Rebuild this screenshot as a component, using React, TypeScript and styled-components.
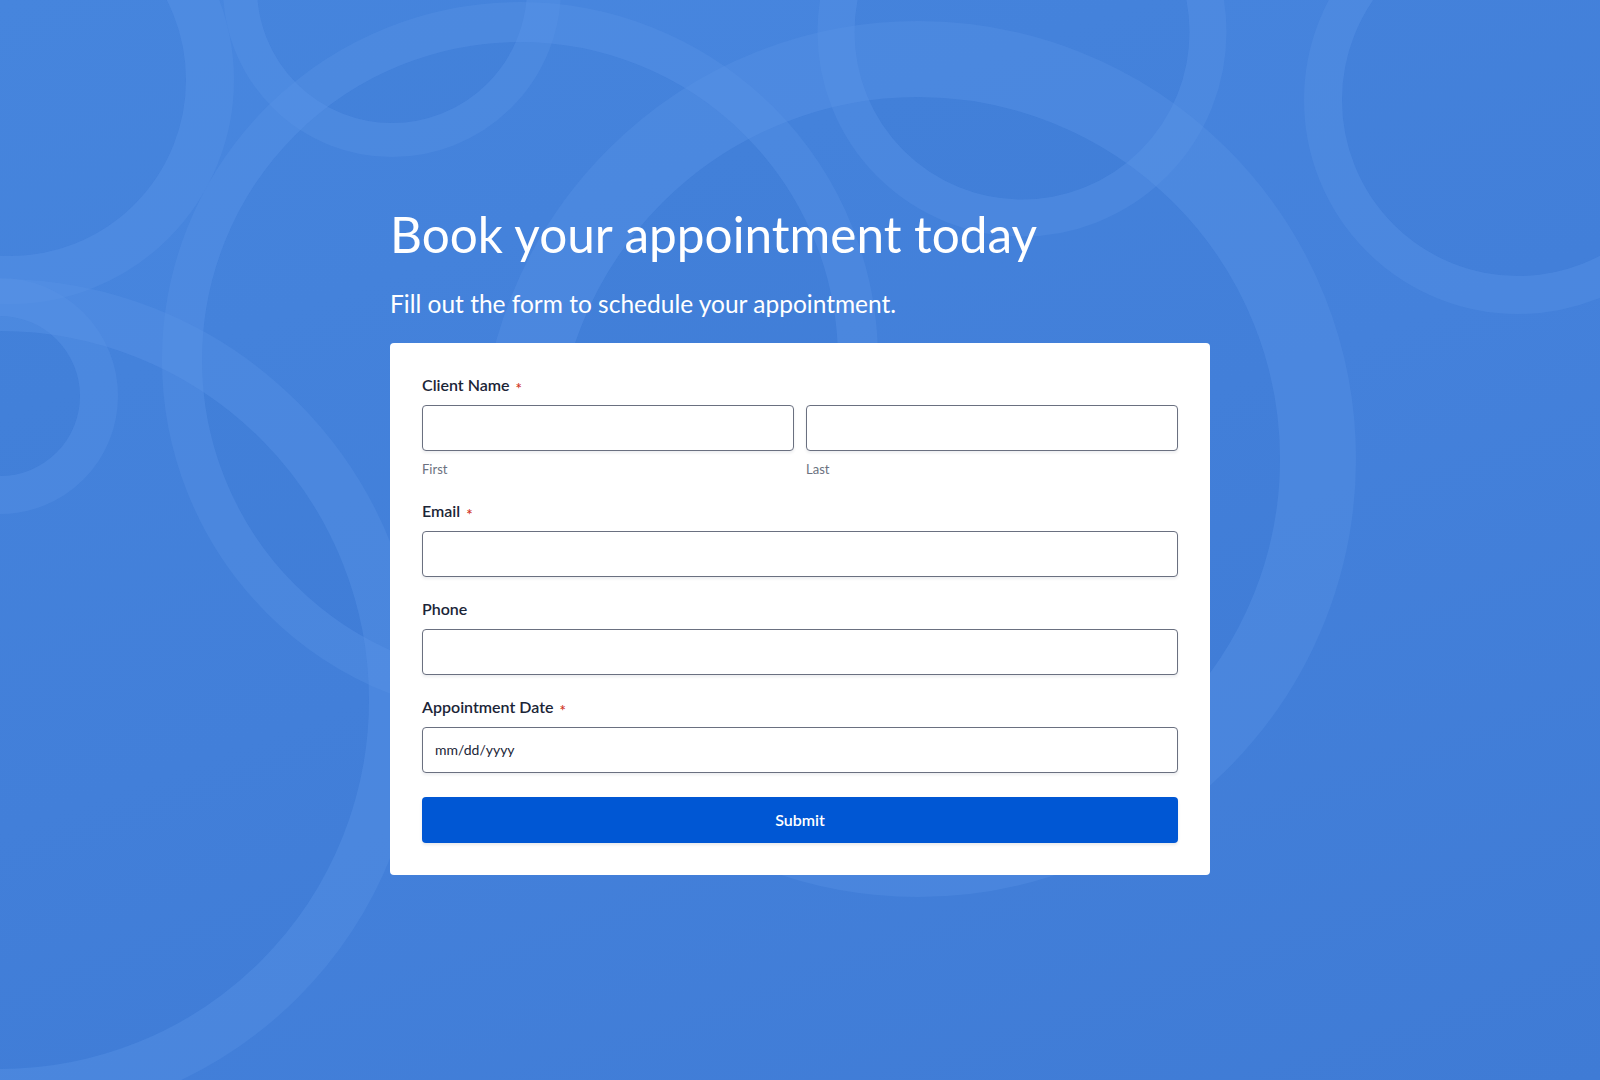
import React from "react";
import styled, { createGlobalStyle } from "styled-components";

const Global = createGlobalStyle`
  html, body { margin: 0; padding: 0; }
  body { font-family: Lato, "Open Sans", Arial, sans-serif; }
  * { box-sizing: border-box; }
`;

const Page = styled.div`
  position: relative;
  width: 100%;
  min-height: 1080px;
  overflow: hidden;
  background: linear-gradient(160deg, #4887df 0%, #4481db 50%, #3f7bd5 100%);
  display: flex;
  justify-content: center;
`;

const Backdrop = styled.svg`
  position: absolute;
  inset: 0;
  width: 100%;
  height: 100%;
  pointer-events: none;
`;

const Content = styled.main`
  position: relative;
  width: 820px;
  padding-top: 205px;
  display: flex;
  flex-direction: column;
`;

const Title = styled.h1`
  margin: 0;
  font-family: Lato, sans-serif;
  font-weight: 400;
  font-size: 49.5px;
  line-height: 1.2;
  color: #ffffff;
`;

const Subtitle = styled.p`
  margin: 25px 0 24px;
  font-family: Lato, sans-serif;
  font-weight: 400;
  font-size: 24.5px;
  line-height: 1.2;
  color: #ffffff;
`;

const Card = styled.form`
  background: #ffffff;
  border-radius: 4px;
  padding: 32px;
  display: flex;
  flex-direction: column;
  gap: 22px;
`;

const Field = styled.div`
  display: flex;
  flex-direction: column;
`;

const Label = styled.label`
  font-family: Lato, sans-serif;
  font-weight: 600;
  font-size: 16px;
  line-height: 20px;
  height: 20px;
  color: #1b2537;
  margin-bottom: 10px;
`;

const Req = styled.span`
  color: #d0341f;
  font-size: 15px;
  line-height: 0;
  margin-left: 6px;
  vertical-align: -3px;
`;

const Pair = styled.div`
  display: grid;
  grid-template-columns: 1fr 1fr;
  gap: 12px;
`;

const Sub = styled.div`
  display: flex;
  flex-direction: column;
`;

const Input = styled.input`
  height: 46px;
  width: 100%;
  border: 1px solid #6a7080;
  border-radius: 4px;
  background: #fff;
  box-shadow: 0 2px 3px rgba(30, 40, 60, 0.08);
  padding: 0 12px;
  font-family: Lato, sans-serif;
  font-size: 14px;
  color: #1b2537;
  outline: none;
  &::placeholder { color: #1b2537; opacity: 1; }
`;

const Hint = styled.span`
  font-family: Lato, sans-serif;
  font-size: 13px;
  line-height: 20px;
  margin-top: 8px;
  color: #6b7180;
`;

const Submit = styled.button`
  margin-top: 2px;
  height: 46px;
  border: none;
  border-radius: 4px;
  background: #0057d4;
  color: #fff;
  font-family: Lato, sans-serif;
  font-weight: 600;
  font-size: 16px;
  box-shadow: 0 2px 3px rgba(30, 40, 60, 0.1);
  cursor: pointer;
`;

const rings = [
  { cx: 10, cy: 80, r: 200, w: 48 },
  { cx: 392, cy: -12, r: 152, w: 34 },
  { cx: 1518, cy: 100, r: 195, w: 38 },
  { cx: 1022, cy: 32, r: 186, w: 37 },
  { cx: 918, cy: 459, r: 400, w: 76 },
  { cx: 520, cy: 360, r: 338, w: 40 },
  { cx: 0, cy: 700, r: 395, w: 52 },
  { cx: 0, cy: 396, r: 99, w: 38 },
];

export default function App() {
  return (
    <>
      <Global />
      <Page>
        <Backdrop viewBox="0 0 1600 1080" preserveAspectRatio="xMidYMid slice">
          {rings.map((c, i) => (
            <circle
              key={`f${i}`}
              cx={c.cx}
              cy={c.cy}
              r={c.r - c.w / 2}
              fill="#1f4fa8"
              fillOpacity={0.035}
            />
          ))}
          {rings.map((c, i) => (
            <circle
              key={`s${i}`}
              cx={c.cx}
              cy={c.cy}
              r={c.r}
              fill="none"
              stroke="#5a95e6"
              strokeOpacity={0.33}
              strokeWidth={c.w}
            />
          ))}
        </Backdrop>
        <Content>
          <Title>Book your appointment today</Title>
          <Subtitle>Fill out the form to schedule your appointment.</Subtitle>
          <Card onSubmit={(e) => e.preventDefault()}>
            <Field>
              <Label>Client Name<Req>*</Req></Label>
              <Pair>
                <Sub>
                  <Input type="text" />
                  <Hint>First</Hint>
                </Sub>
                <Sub>
                  <Input type="text" />
                  <Hint>Last</Hint>
                </Sub>
              </Pair>
            </Field>
            <Field>
              <Label>Email<Req>*</Req></Label>
              <Input type="email" />
            </Field>
            <Field>
              <Label>Phone</Label>
              <Input type="tel" />
            </Field>
            <Field>
              <Label>Appointment Date<Req>*</Req></Label>
              <Input type="text" placeholder="mm/dd/yyyy" />
            </Field>
            <Submit type="submit">Submit</Submit>
          </Card>
        </Content>
      </Page>
    </>
  );
}
